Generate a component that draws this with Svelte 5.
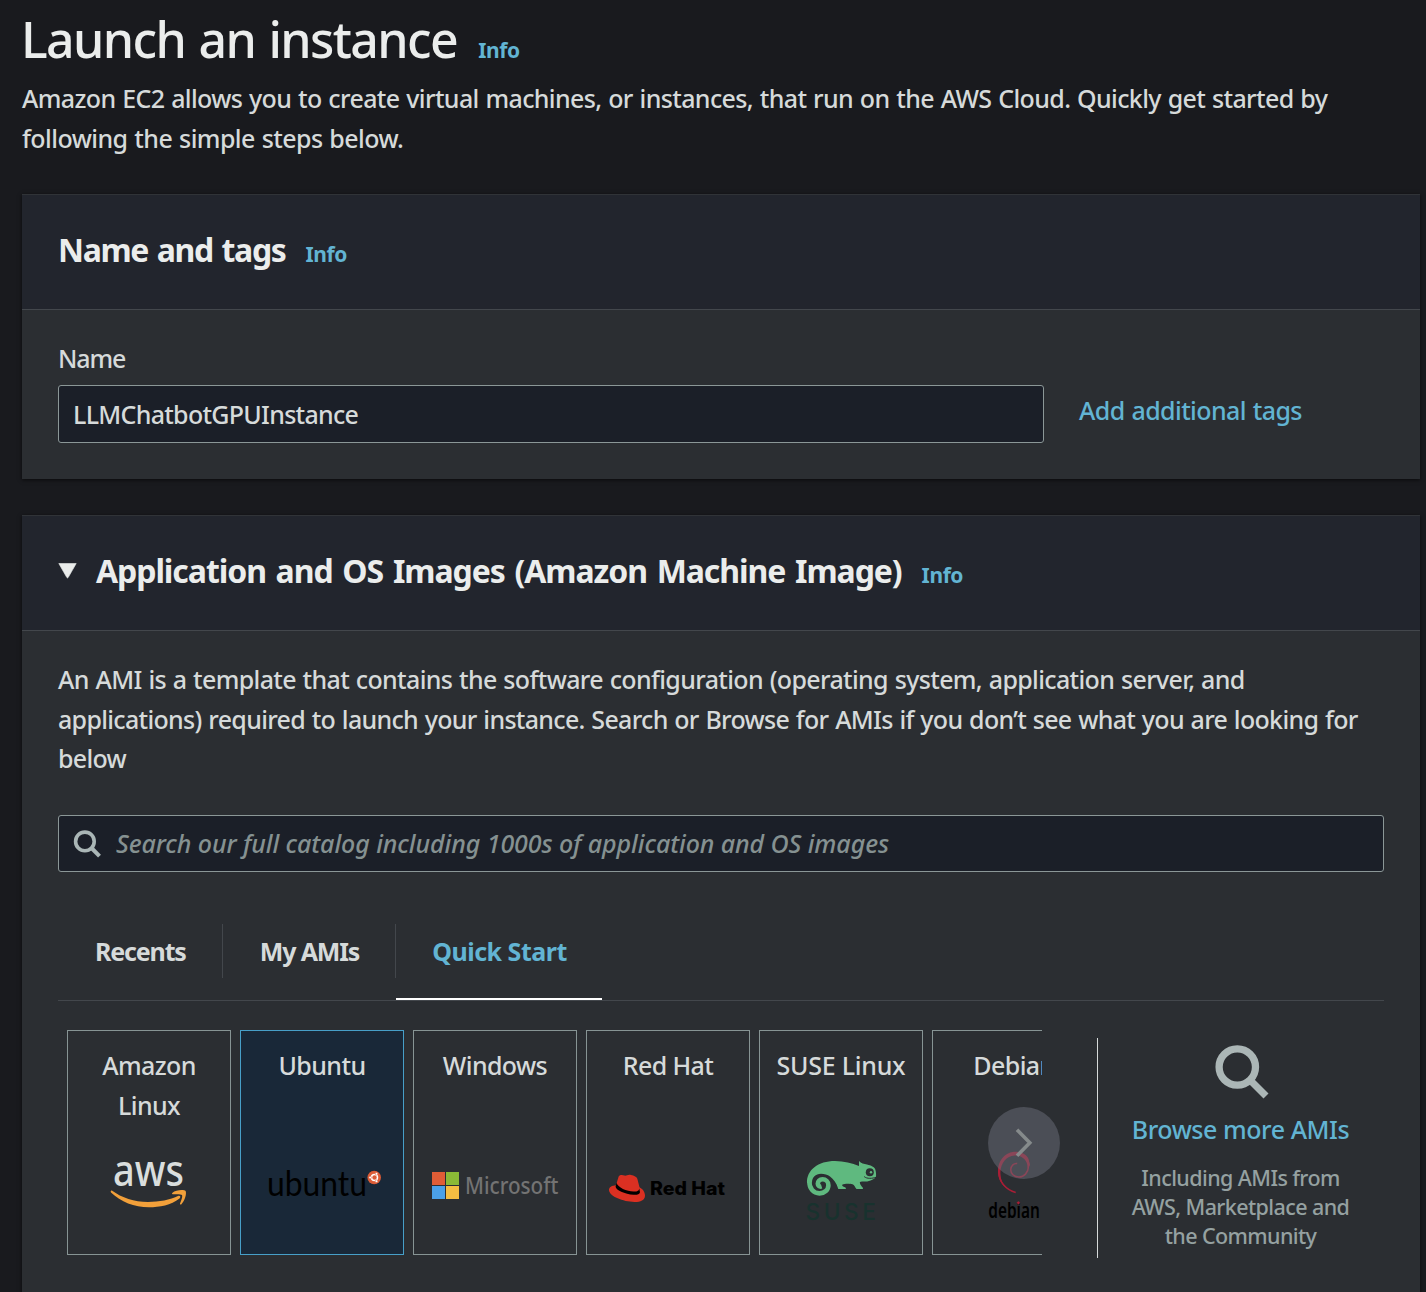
<script>
  let instanceName = $state('LLMChatbotGPUInstance');
  let query = $state('');
  let selected = $state('ubuntu');
  let activeTab = $state('Quick Start');

  const tabs = ['Recents', 'My AMIs', 'Quick Start'];
  const systems = [
    { id: 'amazon', label: 'Amazon Linux' },
    { id: 'ubuntu', label: 'Ubuntu' },
    { id: 'windows', label: 'Windows' },
    { id: 'redhat', label: 'Red Hat' },
    { id: 'suse', label: 'SUSE Linux' },
    { id: 'debian', label: 'Debian' },
  ];
</script>

<main class="page">
  <header class="intro">
    <div class="title-row">
      <h1>Launch an instance</h1>
      <a class="info">Info</a>
    </div>
    <p>
      Amazon EC2 allows you to create virtual machines, or instances, that run on the AWS Cloud. Quickly get started by<br />
      <span class="second">following the simple steps below.</span>
    </p>
  </header>

  <section class="panel">
    <div class="panel-head">
      <h2 class="name-title">Name and tags</h2>
      <a class="info">Info</a>
    </div>
    <div class="panel-body name-body">
      <label for="name">Name</label>
      <div class="name-row">
        <input id="name" class="field name-field" bind:value={instanceName} />
        <a class="add-tags">Add additional tags</a>
      </div>
    </div>
  </section>

  <section class="panel images">
    <div class="panel-head">
      <svg class="caret" width="19" height="16" viewBox="0 0 19 16"><path d="M0.8 0.5H18.2L10.3 14.3Q9.5 15.6 8.7 14.3Z" fill="#eaeceb" stroke="#eaeceb" stroke-width=".6" stroke-linejoin="round" /></svg>
      <h2>Application and OS Images (Amazon Machine Image)</h2>
      <a class="info">Info</a>
    </div>
    <div class="panel-body image-body">
      <p class="about">
        <span class="lead">An AMI is a template that contains the software configuration (operating system, application server, and</span><br />
        applications) required to launch your instance. Search or Browse for AMIs if you don’t see what you are looking for<br />
        below
      </p>

      <div class="field search">
        <svg width="28" height="28" viewBox="0 0 28 28" fill="none" stroke="#aab6b6" stroke-width="3.6">
          <circle cx="11.9" cy="11.4" r="9.3" /><path d="M18.5 18L26.5 26.2" stroke-width="4" />
        </svg>
        <input bind:value={query} placeholder="Search our full catalog including 1000s of application and OS images" />
      </div>

      <div class="tabs">
        {#each tabs as tab}
          <button class="tab" class:active={tab === activeTab} onclick={() => (activeTab = tab)}><span>{tab}</span></button>
        {/each}
      </div>

      <div class="picker">
        <div class="carousel">
          <div class="track">
            {#each systems as os}
              <button class="tile" class:selected={os.id === selected} onclick={() => (selected = os.id)}>
                <span class="tile-label {os.id}">{os.label}</span>
                <svg width="162" height="112" viewBox="0 0 162 112">
                  {#if os.id === 'amazon'}
                    <text class="w-aws" x="45" y="60.6" textLength="71" lengthAdjust="spacingAndGlyphs">aws</text>
                    <g fill="#f2a03a">
                      <path d="M43.8 65.6C54 73 66 77 80 77C91 77 102 75 110.5 70.8C112.3 70.4 113 72 111.5 73.4C103 80 91.5 82.2 81 82.2C66 82.2 53 77 43 67.5C42.3 66.5 42.8 65.3 43.8 65.6Z" />
                      <path d="M104.2 68C108 64.6 116.2 64.5 117.6 66C118.8 68 117.2 75.8 113.2 79.4C112.5 79.8 111.8 79.4 112 78.6C113.2 76 114.8 71.4 114 70C113.2 68.9 108 69.1 105.2 69.3C104.2 69.3 103.7 68.5 104.2 68Z" />
                    </g>
                  {:else if os.id === 'ubuntu'}
                    <text class="w-ubuntu" x="26" y="70.5" textLength="100" lengthAdjust="spacingAndGlyphs">ubuntu</text>
                    <circle cx="133.2" cy="52.5" r="6.8" fill="#dc5c36" />
                    <circle cx="133.5" cy="52.5" r="3" fill="none" stroke="#fff" stroke-width="1.5" />
                    <g fill="#fff" stroke="#dc5c36" stroke-width=".5">
                      <circle cx="129.2" cy="52.5" r="1.3" /><circle cx="135.5" cy="48.8" r="1.3" /><circle cx="135.5" cy="56.2" r="1.3" />
                    </g>
                  {:else if os.id === 'windows'}
                    <rect x="18" y="47" width="13" height="13" fill="#e05d36" />
                    <rect x="32" y="47" width="13" height="13" fill="#8bb936" />
                    <rect x="18" y="61" width="13" height="13" fill="#4ba0e8" />
                    <rect x="32" y="61" width="13" height="13" fill="#f5bd42" />
                    <text class="w-ms" x="51" y="69" textLength="93.5" lengthAdjust="spacingAndGlyphs">Microsoft</text>
                  {:else if os.id === 'redhat'}
                    <path fill="#db3022" d="M29 60.2L31.5 52C32.2 49.6 35.4 49.6 37.4 50.6C39.5 51 41 49.2 44 50C47 50.8 50 51.6 50.4 54L52.5 62.2C55.5 63.8 58 66.8 58 70.5C58 75.6 53 77.1 47.5 77C36 76.7 22.8 71.6 22 65.3C21.8 62 25 60.4 29 60.2Z" />
                    <path fill="#000" d="M29.6 57.8C30.5 62.5 40 66.5 46.5 66.6C50 66.7 52.3 65.9 52.2 63.3L53 67.2C52.5 69.4 50 69.9 46.5 69.7C38 69.2 28.3 64.8 28.6 61.4Z" />
                    <text class="w-rh" x="63" y="69.7" textLength="75" lengthAdjust="spacingAndGlyphs">Red Hat</text>
                  {:else if os.id === 'suse'}
                    <path fill="#5fb97f" d="M99 36C101 38.5 104 38.8 107 39.5C111 40.5 114.5 42 115.3 44.5C116 47 116.3 49.5 116 51.5C115.5 53.8 110 56.5 105.5 56.5C102.5 56.5 99.8 56.3 99.8 57.6C100 59.5 101.5 61.5 102.7 62.4L103 64H96.5C95 62.5 94.5 60 92.5 59.3C90 58.5 84.5 58.5 82.5 59.5C81.5 60.5 82.5 61.7 85.5 62.5L86 64H78.3C76.5 58 73.5 54 70 51.5C67.5 49.8 64.5 48.8 61 48.8C55.5 48.8 52 52.5 52 57.5L47 58C46.5 45 58 36 75 36C84 36 92 38.2 99 41Z" />
                    <path fill="none" stroke="#5fb97f" stroke-width="4.6" d="M49.4 56.5C49.2 63.5 53.5 68.4 59.5 68.4C64.5 68.4 68.4 64.8 68.4 60.2C68.4 56.6 65.6 54.3 62.6 54.3C59.6 54.3 57.8 56.4 57.8 58.8C57.8 61 59.6 62 61.6 61.4" />
                    <circle cx="109.8" cy="47.2" r="4" fill="#2b2e32" />
                    <circle cx="111" cy="47.2" r="1.2" fill="#5fb97f" />
                    <path d="M104.2 51.6C107 54 112 53.6 116.5 52.2" fill="none" stroke="#2b2e32" stroke-width="1" />
                    <text class="w-suse" x="45.5" y="95.3">SUSE</text>
                  {:else if os.id === 'debian'}
                    <path fill="none" stroke="#a91e36" stroke-width="1.5" d="M82.7 67.4C73 65 66 57 66 47C66 37 72.5 28.6 82 28.2C91 28 96 34 95.6 41C95.2 48 91 52 86 52C81 52 77.6 48.6 77.8 44.5C78 40.5 81 38 84.2 38.6" />
                    <path fill="#a91e36" d="M65 47C64.5 38 70 28 81 26.8C88 26 94 29.5 95.5 34L97 40L94.6 43C94.8 35 89 30.2 81.5 30.4C73.5 30.8 67.8 38 67.4 47C67.2 53 69 58.5 73 62.5C68 59.5 65 53 65 47Z" />
                    <text class="w-deb" x="55.3" y="92.5" textLength="51.5" lengthAdjust="spacingAndGlyphs">debian</text>
                    <path d="M85.4 75.9L87.3 77.8L85.4 79.7L83.5 77.8Z" fill="#a91e36" stroke="#2b2e32" stroke-width=".3" />
                  {/if}
                </svg>
              </button>
            {/each}
          </div>
          <button class="next" aria-label="Next">
            <svg width="72" height="72" viewBox="0 0 72 72"><path d="M29 22.8L41.8 35.8L29 48.8" fill="none" stroke="#858a8b" stroke-width="3.6" /></svg>
          </button>
        </div>

        <aside class="browse">
          <svg width="54" height="54" viewBox="0 0 54 54" fill="none" stroke="#abb6b6" stroke-width="7.3">
            <circle cx="22.3" cy="22" r="18.2" /><path d="M34 34L51 51" stroke-width="7" />
          </svg>
          <a>Browse more AMIs</a>
          <p>Including AMIs from<br />AWS, Marketplace and<br />the Community</p>
        </aside>
      </div>
    </div>
  </section>
</main>

<style>
  :global(body) { background: #191a1e; }
  * { box-sizing: border-box; }
  .page {
    height: 1292px;
    overflow: hidden;
    padding: 9px 6px 0 22px;
    background: #191a1e;
    color: #d6dada;
    font: 500 25px/39.5px "Noto Sans", "Open Sans", sans-serif;
    white-space: nowrap;
  }
  h1, h2, p { margin: 0; }
  button { font: inherit; color: inherit; background: none; border: 0; padding: 0; }
  svg { display: block; flex: none; }
  a { color: #62b4d3; }
  .title-row { display: flex; align-items: baseline; height: 61px; }
  h1 { font-size: 50px; font-weight: 500; line-height: 60px; letter-spacing: -1.6px; word-spacing: 1.8px; color: #ebedec; margin: 0 21px 0 -1px; }
  .info { font-size: 21px; font-weight: 700; letter-spacing: -.4px; }
  .intro p { margin-top: 9px; letter-spacing: -.625px; word-spacing: .85px; }
  .second { letter-spacing: -.56px; }

  .panel { margin-top: 36px; border-top: 1px solid #303337; background: #2b2e32; box-shadow: 0 1px 4px rgba(0, 0, 0, .65); }
  .panel-head {
    display: flex; align-items: baseline; height: 115px; padding: 25px 36px 0;
    background: #22252d; border-bottom: 1px solid #43474c;
  }
  h2 { font-size: 32px; font-weight: 700; line-height: 60px; letter-spacing: -1.07px; word-spacing: 2.5px; color: #ebedec; margin-right: 20px; }
  .name-title { letter-spacing: -1.35px; word-spacing: 1.7px; }
  .panel-body { padding: 0 36px; }
  .name-body { height: 169px; padding-top: 29px; }
  label { display: block; height: 46px; letter-spacing: -1.1px; }
  .name-row { display: flex; gap: 35px; align-items: center; }
  .field { background: #1b1f28; border: 1px solid #8b9797; border-radius: 3px; }
  input { color: inherit; font: inherit; outline: 0; min-width: 0; }
  .name-field { width: 986px; height: 58px; padding: 0 14px; letter-spacing: -.71px; }
  .add-tags { margin-top: -6px; letter-spacing: -.6px; word-spacing: 1px; }

  .images { height: 800px; }
  .caret { margin-right: 19px; position: relative; top: -4px; }
  .image-body { padding-top: 29px; }
  .about { letter-spacing: -.69px; word-spacing: .85px; height: 155px; }
  .lead { letter-spacing: -.65px; }
  .search { display: flex; align-items: center; height: 57px; padding-left: 14px; gap: 15px; }
  .search input { flex: 1; border: 0; background: none; padding: 0; font-style: italic; letter-spacing: -.085px; }
  .search input::placeholder { color: #859191; opacity: 1; }

  .tabs { display: flex; margin-top: 52px; height: 77px; border-bottom: 1px solid #43474c; }
  .tab { height: 76px; font-weight: 700; letter-spacing: -1.15px; }
  .tab span { display: block; height: 54px; line-height: 54px; margin-bottom: 22px; padding: 0 36px 0 37px; border-right: 1px solid #43474c; }
  .tab.active { color: #62b4d3; letter-spacing: -.5px; border-bottom: 2px solid #fff; }
  .tab.active span { border-right: 0; margin-bottom: 20px; padding: 0 35px 0 36px; }

  .picker { display: flex; padding-top: 29px; }
  .carousel { position: relative; width: 975px; margin-left: 9px; }
  .track { display: flex; gap: 9px; overflow: hidden; }
  .tile { flex: none; display: flex; flex-direction: column; align-items: center; width: 164px; height: 225px; padding-top: 15px; border: 1px solid #879494; }
  .tile.selected { background: #192838; border-color: #479fc8; }
  .tile-label { height: 79px; padding: 0 10px; white-space: normal; letter-spacing: -.6px; }
  .tile-label.suse { letter-spacing: -.25px; white-space: nowrap; }
  .tile-label.amazon { width: 130px; }
  .next { position: absolute; left: 921px; top: 77px; width: 72px; height: 72px; border-radius: 50%; background: rgba(107, 110, 122, .5); }

  .w-aws { font: 500 43px "Noto Sans"; fill: #dadedd; }
  .w-ubuntu { font: 400 34px Lato; fill: #000; }
  .w-ms { font: 500 23px "Noto Sans"; fill: #737373; letter-spacing: 0; }
  .w-rh { font: 800 18.5px Inter; fill: #000; letter-spacing: 0; }
  .w-suse { font: 500 22.5px Inter; fill: #18322e; letter-spacing: 3.7px; }
  .w-deb { font: 600 22px "Noto Sans"; fill: #000; }

  .browse { flex: 1; display: flex; flex-direction: column; align-items: center; height: 220px; margin: 8px 0 0 55px; padding-top: 7px; border-left: 1px solid #d6dada; text-align: center; }
  .browse svg { margin-left: 1px; }
  .browse a { margin: 11px 1px 0 0; letter-spacing: -.45px; }
  .browse p { margin: 13px 1px 0 0; font-size: 21.5px; line-height: 29px; letter-spacing: -.6px; color: #95a1a1; }
</style>
